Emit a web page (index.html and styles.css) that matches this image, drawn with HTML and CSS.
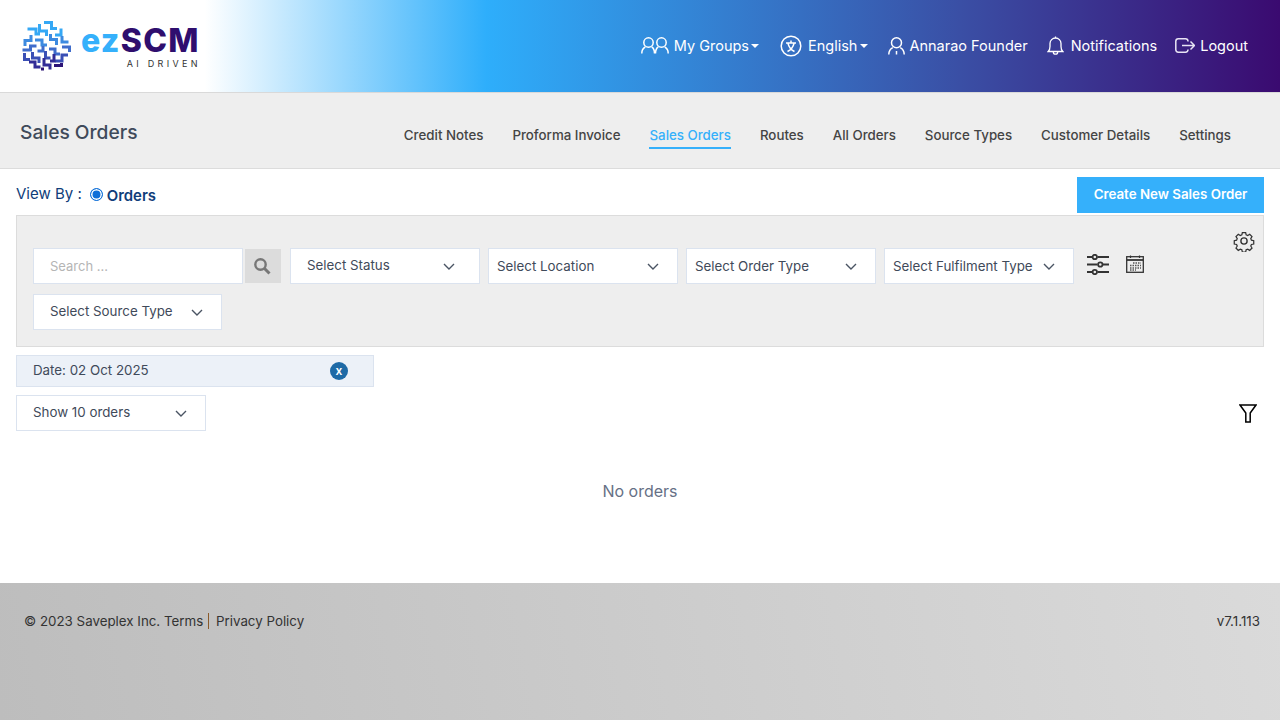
FILE: index.html
```html
<!DOCTYPE html>
<html lang="en">
<head>
<meta charset="utf-8">
<title>Sales Orders</title>
<link rel="stylesheet" href="styles.css">
</head>
<body>
<header class="topbar">
  <div class="brand">
    <svg class="brand-mark" viewBox="0 0 50 50" fill="none" stroke-width="3">
      <g stroke="#35a8f5"><path d="M23 1.500h7.500v6H36M18.500 3v7h7v5M6.500 8H15v5h4M34 14h6V7.500"/></g>
      <g stroke="#3d8ae0"><path d="M10 14v5.500H4V25M29.500 13v5.500h6V24M14 19h7v5h5M41 15v6h6.500"/></g>
      <g stroke="#3f6ccb"><path d="M1.500 29h8v-4h6M16.500 30H22v-5M28 28h6v5h5M41 26h7.500v5"/></g>
      <g stroke="#3a4fb5"><path d="M3.500 32v6.500H9M11.500 31v6h6.500v5M24.500 30v7h5M47 34h-6v6h-7"/></g>
      <g stroke="#322c96"><path d="M8 41h6v5h5.500M23 37v7h6v4.500M33 33v7h-4"/></g>
      <g stroke="#2c1477"><path d="M33 44.500h7.500V42M20 48h3"/></g>
    </svg>
    <div class="brand-text">
      <div class="brand-name"><span class="ez">ez</span><span class="scm">SCM</span></div>
      <div class="brand-tag">AI DRIVEN</div>
    </div>
  </div>
  <nav class="topnav">
    <a class="topnav-item item-groups">
      <svg class="ic-groups" viewBox="0 0 28 17" fill="none" stroke="#fff" stroke-width="1.500"><circle cx="7.500" cy="5.500" r="4.700"/><circle cx="20.500" cy="5.500" r="4.700"/><path d="M.800 16.500c0-3.500 1.500-5.500 3.500-6.500M13.500 16.500c0-3.500-1-5.500-2.800-6.500M14.500 16.500c0-3.500 1-5.500 2.800-6.500M27.200 16.500c0-3.500-1.500-5.500-3.500-6.500"/></svg>
      <span>My Groups</span><span class="caret"></span>
    </a>
    <a class="topnav-item item-lang">
      <svg class="ic-lang" viewBox="0 0 22 22" fill="none" stroke="#fff" stroke-width="1.500"><circle cx="11" cy="11" r="9.800"/><path d="M6 8h10M11 5.500V8M8 8.500c1 4 3.500 6.500 6.500 8M14 8.500c-1 4-3.500 6.500-6.500 8"/></svg>
      <span>English</span><span class="caret"></span>
    </a>
    <a class="topnav-item item-user">
      <svg class="ic-user" viewBox="0 0 17 18" fill="none" stroke="#fff" stroke-width="1.500"><circle cx="8.500" cy="5.800" r="5"/><path d="M.800 17.500c0-3.500 1.500-5.500 4-6.800M16.200 17.500c0-3.500-1.500-5.500-4-6.800M8.500 14v3.500"/></svg>
      <span>Annarao Founder</span>
    </a>
    <a class="topnav-item item-bell">
      <svg class="ic-bell" viewBox="0 0 16 19" fill="none" stroke="#fff" stroke-width="1.300"><path d="M.700 15.500h14.600c-1.500-1.300-1.800-3-1.800-5V7.500a5.500 5.500 0 0 0-11 0v3c0 2-.300 3.700-1.800 5zM8 .500v1.500M5.800 16a2.200 2.200 0 0 0 4.400 0"/></svg>
      <span>Notifications</span>
    </a>
    <a class="topnav-item item-logout">
      <svg class="ic-logout" viewBox="0 0 20 15" fill="none" stroke="#e8e4f4" stroke-width="1.500"><path d="M13 3.500V3.200A2.500 2.500 0 0 0 10.500.800H3.300A2.500 2.500 0 0 0 .800 3.200v8.600a2.500 2.500 0 0 0 2.500 2.400h7.200a2.500 2.500 0 0 0 2.500-2.400v-.300M7 7.500h12M15.500 3.500l4 4-4 4"/></svg>
      <span>Logout</span>
    </a>
  </nav>
</header>

<section class="subbar">
  <h1 class="page-title">Sales Orders</h1>
  <nav class="tabs">
    <a class="tab">Credit Notes</a>
    <a class="tab">Proforma Invoice</a>
    <a class="tab tab-active">Sales Orders</a>
    <a class="tab">Routes</a>
    <a class="tab">All Orders</a>
    <a class="tab">Source Types</a>
    <a class="tab">Customer Details</a>
    <a class="tab">Settings</a>
  </nav>
</section>

<main class="content">
  <div class="viewby-row">
    <div class="viewby">
      <span class="viewby-label">View By :</span>
      <label class="radio-label"><span class="radio"></span>Orders</label>
    </div>
    <button class="primary-btn">Create New Sales Order</button>
  </div>

  <section class="filters">
    <svg class="ic-gear" viewBox="0 0 24 24" fill="none" stroke="#333" stroke-width="1.500"><path d="M10 2.500h4l.600 2.800 1.900.800 2.400-1.500 2.800 2.800-1.500 2.400.800 1.900 2.800.600v4l-2.800.600-.800 1.900 1.500 2.400-2.800 2.800-2.400-1.500-1.900.800-.600 2.800h-4l-.600-2.800-1.900-.800-2.400 1.500-2.800-2.800 1.500-2.400-.800-1.900-2.800-.600v-4l2.800-.600.800-1.900-1.500-2.400 2.800-2.800 2.400 1.500 1.900-.800z" transform="translate(1.200 .600) scale(.9)"/><circle cx="12" cy="12" r="3.400"/></svg>
    <div class="filter-row">
      <div class="search-group">
        <div class="search-input">Search ...</div>
        <div class="search-btn"><svg viewBox="0 0 18 18" fill="none" stroke="#777" width="18" height="18"><circle cx="7.500" cy="7.500" r="5.200" stroke-width="2.400"/><path d="M11.500 11.500l5 5" stroke-width="3"/></svg></div>
      </div>
      <div class="select sel-status raised">Select Status<svg class="chev" viewBox="0 0 12 7"><path d="M1 1l5 5 5-5"/></svg></div>
      <div class="select sel-narrow">Select Location<svg class="chev" viewBox="0 0 12 7"><path d="M1 1l5 5 5-5"/></svg></div>
      <div class="select sel-narrow">Select Order Type<svg class="chev" viewBox="0 0 12 7"><path d="M1 1l5 5 5-5"/></svg></div>
      <div class="select sel-narrow">Select Fulfilment Type<svg class="chev" viewBox="0 0 12 7"><path d="M1 1l5 5 5-5"/></svg></div>
      <div class="tools">
        <svg class="ic-sliders" viewBox="0 0 22 21" fill="none" stroke="#333" stroke-width="2.200"><path d="M0 3h5M10.500 3H22M0 10.500h10.500M16 10.500h6M0 18h5M10.500 18H22"/><circle cx="7.800" cy="3" r="2.200" stroke-width="1.800"/><circle cx="13.300" cy="10.500" r="2.200" stroke-width="1.800"/><circle cx="7.800" cy="18" r="2.200" stroke-width="1.800"/></svg>
        <svg class="ic-cal" viewBox="0 0 18 18" fill="none" stroke="#333"><rect x=".700" y="1.700" width="16.600" height="15.600" stroke-width="1.300"/><path d="M.700 5h16.600" stroke-width="1.800"/><path d="M4.500 .500v2.500M13.500 .500v2.500" stroke-width="1.200"/><path d="M7 8h8M4 10.500h11M4 13h11M4 15h6" stroke-width="1.300" stroke-dasharray="1.500 1" stroke="#555"/></svg>
      </div>
      <div class="select sel-source raised">Select Source Type<svg class="chev" viewBox="0 0 12 7"><path d="M1 1l5 5 5-5"/></svg></div>
    </div>
  </section>

  <div class="date-chip">
    <span class="chip-text">Date: 02 Oct 2025</span>
    <span class="chip-x">x</span>
  </div>

  <div class="show-row">
    <div class="select sel-show raised">Show 10 orders<svg class="chev" viewBox="0 0 12 7"><path d="M1 1l5 5 5-5"/></svg></div>
    <svg class="ic-filter" viewBox="0 0 18 19" fill="none" stroke="#000" stroke-width="1.500"><path d="M1 1h16l-5.800 8v9H6.800V9z"/></svg>
  </div>

  <p class="empty">No orders</p>
</main>

<footer class="footer">
  <div class="footer-left">© 2023 Saveplex Inc. Terms <span class="sep">Privacy Policy</span></div>
  <div class="footer-right">v7.1.113</div>
</footer>
</body>
</html>
```
FILE: styles.css
```css
* { box-sizing: border-box; }
html, body { margin: 0; padding: 0; }
body {
  width: 1280px;
  height: 720px;
  overflow: hidden;
  font-family: Inter, "Liberation Sans", sans-serif;
  background: #fff;
  display: flex;
  flex-direction: column;
}
.topbar {
  height: 93px;
  flex: none;
  display: flex;
  align-items: center;
  justify-content: space-between;
  padding: 0 32px 1px 21px;
  background: linear-gradient(90deg, #fff 0, #fff 16%, #2eaefb 38%, #3a4fa5 75%, #3a0a70 100%);
  border-bottom: 1px solid #d9d9d9;
}
.brand { display: flex; align-items: center; gap: 10px; }
.brand-mark { width: 50px; height: 50px; }
.brand-text { display: flex; flex-direction: column; margin-top: 2px; }
.brand-name { font: 800 32px/32px Inter, sans-serif; letter-spacing: 1.300px; }
.ez { color: #35b0fb; }
.scm { color: #2f0e6e; }
.brand-tag { font-size: 9px; line-height: 10px; letter-spacing: 3.300px; color: #333; text-align: right; margin-top: 2px; margin-right: -1px; }
.topnav { display: flex; align-items: center; color: #fff; font-size: 14.500px; font-weight: 400; }
.topnav-item { display: flex; align-items: center; white-space: nowrap; }
.item-groups { gap: 5px; }
.item-lang { gap: 6px; margin-left: 21px; }
.item-lang .caret { margin-left: -3px; }
.item-user { gap: 4px; margin-left: 20px; }
.item-bell { gap: 7px; margin-left: 19px; }
.item-logout { gap: 5px; margin-left: 18px; }
.ic-groups { width: 28px; height: 17px; }
.ic-lang { width: 22px; height: 22px; }
.ic-user { width: 17px; height: 18px; }
.ic-bell { width: 17px; height: 19px; }
.ic-logout { width: 20px; height: 15px; }
.caret {
  width: 0; height: 0;
  margin-left: -3px;
  border-left: 4.500px solid transparent;
  border-right: 4.500px solid transparent;
  border-top: 4.500px solid #fff;
}
.subbar {
  height: 76px;
  flex: none;
  background: #eeeeee;
  border-bottom: 1px solid #dcdcdc;
  display: flex;
  justify-content: space-between;
  padding: 0 49px 0 20px;
}
.page-title { margin: 27px 0 0; font-size: 19.200px; line-height: 24px; font-weight: 500; color: #3f4a5a; }
.tabs { display: flex; gap: 29px; align-items: flex-start; margin-top: 32px; font-size: 13.300px; line-height: 17px; font-weight: 500; color: #444; }
.tab { padding: 2px 0 3px; border-bottom: 2px solid transparent; }
.tab-active { color: #35b0fb; border-bottom-color: #35b0fb; }
.content { flex: 1; padding: 8px 16px 0; color: #3f4a5a; }
.viewby-row { display: flex; justify-content: space-between; align-items: flex-start; height: 38px; }
.viewby { display: flex; align-items: center; margin-top: 7px; color: #0f3d7a; }
.viewby-label { font-size: 15px; margin-right: 8px; margin-top: -2px; }
.radio-label { display: flex; align-items: center; font-size: 14.900px; font-weight: 600; margin-top: 3px; }
.radio {
  width: 13px; height: 13px;
  border-radius: 50%;
  border: 1.500px solid #0f6fd8;
  background: #0f6fd8;
  box-shadow: inset 0 0 0 1.500px #fff;
  margin-right: 4px;
  margin-top: -3px;
}
.primary-btn {
  width: 187px;
  height: 36px;
  border: 0;
  padding: 0 0 2px;
  background: #35b0fb;
  color: #fff;
  font: 600 13.330px Inter, sans-serif;
}
.filters {
  position: relative;
  height: 132px;
  background: #eeeeee;
  border: 1px solid #dcdcdc;
  padding: 32px 16px 0;
}
.ic-gear { position: absolute; top: 14px; right: 8px; width: 22px; height: 22px; }
.filter-row { display: flex; flex-wrap: wrap; align-items: flex-start; column-gap: 8px; row-gap: 10px; }
.search-group { display: flex; gap: 2px; margin-right: 1px; }
.search-input {
  width: 210px; height: 36px;
  background: #fff;
  border: 1px solid #dbe3ef;
  padding: 0 16px;
  line-height: 35px;
  font-size: 13px;
  color: #b5b5b5;
}
.search-btn { width: 36px; height: 34px; margin-top: 1px; padding-right: 2px; background: #dcdcdc; display: flex; align-items: center; justify-content: center; }
.select {
  height: 36px;
  background: #fff;
  border: 1px solid #dbe3ef;
  display: flex;
  align-items: center;
  justify-content: space-between;
  font-size: 13.330px;
  color: #3f4a5a;
  white-space: nowrap;
}
.raised { padding-bottom: 2px; }
.chev { width: 12px; height: 7px; fill: none; stroke: #4a5463; stroke-width: 1.400; flex: none; }
.raised .chev { margin-top: 2px; }
.sel-status { width: 190px; padding-left: 16px; padding-right: 24px; }
.sel-narrow { width: 190px; padding-left: 8px; padding-right: 18px; }
.sel-narrow:last-of-type { padding-right: 18px; }
.sel-source { width: 189px; padding-left: 16px; padding-right: 18px; }
.sel-show { width: 190px; padding-left: 16px; padding-right: 18px; }
.tools { display: flex; align-items: center; gap: 17px; height: 32px; margin-left: 5px; }
.ic-sliders { width: 22px; height: 21px; }
.ic-cal { width: 18px; height: 18px; }
.date-chip {
  margin-top: 8px;
  width: 358px;
  height: 32px;
  background: #ecf1f8;
  border: 1px solid #dbe3ef;
  display: flex;
  align-items: center;
  justify-content: space-between;
  padding: 0 25px 0 16px;
  font-size: 13.330px;
}
.chip-text { margin-top: -2px; }
.chip-x {
  width: 18px; height: 18px;
  border-radius: 50%;
  background: #1e6aa6;
  color: #fff;
  font-size: 12px;
  font-weight: 600;
  text-align: center;
  line-height: 17px;
}
.show-row { display: flex; justify-content: space-between; align-items: center; margin-top: 8px; }
.ic-filter { width: 18px; height: 19px; margin-right: 7px; }
.empty { margin: 50px 0 0; text-align: center; font-size: 16px; line-height: 20px; color: #667085; }
.footer {
  height: 137px;
  flex: none;
  background: linear-gradient(80deg, #bdbdbd 0, #dadada 100%);
  display: flex;
  justify-content: space-between;
  padding: 30px 20px 0 24px;
  font-size: 13.330px;
  line-height: 17px;
  color: #333;
}
.sep { border-left: 1px solid #8a5a2a; padding-left: 7px; margin-left: 1px; }
```
